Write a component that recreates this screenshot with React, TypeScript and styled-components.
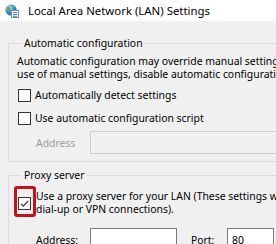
import React from "react";
import styled, { createGlobalStyle } from "styled-components";

const GlobalStyle = createGlobalStyle`
  html, body {
    margin: 0;
    padding: 0;
    background: #f0f0f0;
    overflow: hidden;
  }
  body {
    font-family: "Noto Sans", "Open Sans", sans-serif;
    font-size: 10.4px;
    color: #000;
  }
`;

const Window = styled.div`
  width: 276px;
  height: 244px;
  overflow: hidden;
  background: #f0f0f0;
`;

const TitleBar = styled.div`
  height: 21px;
  background: #fff;
  display: flex;
  align-items: center;
  padding-left: 5px;
  gap: 9px;
  white-space: nowrap;
`;

const Title = styled.span`
  font-size: 11.4px;
  color: #000;
`;

const Body = styled.div`
  padding: 14px 0 0 8px;
  display: flex;
  flex-direction: column;
  gap: 5px;
`;

const Group = styled.fieldset`
  width: 400px;
  margin: 0;
  border: 1px solid #dcdcdc;
  padding: 4px 0 7px 7px;
  display: flex;
  flex-direction: column;
  min-width: 0;
`;

const Legend = styled.legend`
  padding: 0 2px;
  margin-left: 6px;
  line-height: 16px;
  white-space: nowrap;
`;

const Para = styled.div`
  line-height: 13px;
  white-space: nowrap;
  margin-left: 1px;
`;

const Row = styled.div<{ $top?: number }>`
  display: flex;
  align-items: center;
  margin-top: ${(p) => p.$top ?? 0}px;
  margin-left: 2px;
  white-space: nowrap;
  line-height: 13px;
  position: relative;
`;

const Box = styled.span`
  width: 13px;
  height: 13px;
  box-sizing: border-box;
  border: 1px solid #333;
  background: #fff;
  flex: none;
  display: flex;
  align-items: center;
  justify-content: center;
  margin-right: 4px;
`;

const Highlight = styled.span`
  position: absolute;
  left: -4px;
  top: -4px;
  width: 22px;
  height: 31px;
  box-sizing: border-box;
  border: 3px solid #c1121f;
  border-radius: 3px;
`;

const FieldRow = styled.div<{ $top: number }>`
  display: flex;
  align-items: center;
  margin-top: ${(p) => p.$top}px;
  margin-left: 20px;
  white-space: nowrap;
`;

const Label = styled.span<{ $width: number; $gap?: number; $disabled?: boolean }>`
  width: ${(p) => p.$width}px;
  margin-left: ${(p) => p.$gap ?? 0}px;
  flex: none;
  color: ${(p) => (p.$disabled ? "#9b9b9b" : "#000")};
`;

const Input = styled.div<{ $width: number; $disabled?: boolean }>`
  width: ${(p) => p.$width}px;
  height: 23px;
  box-sizing: border-box;
  flex: none;
  border: 1px solid ${(p) => (p.$disabled ? "#cfcfcf" : "#7a7a7a")};
  background: ${(p) => (p.$disabled ? "#f0f0f0" : "#fff")};
  padding-left: 4px;
  display: flex;
  align-items: center;
`;

const NetIcon = () => (
  <svg width="14" height="14" viewBox="0 0 14 14">
    <defs>
      <radialGradient id="g" cx="0.35" cy="0.3" r="0.8">
        <stop offset="0" stopColor="#bfe3ff" />
        <stop offset="0.5" stopColor="#3a8fd8" />
        <stop offset="1" stopColor="#1d5fa8" />
      </radialGradient>
    </defs>
    <circle cx="6" cy="6" r="5.6" fill="url(#g)" />
    <path d="M2.5 3.2c1.2-.6 2.3-.2 2.6.7.3.9-.6 1.4-.2 2.3.4.9-.4 1.8-1.4 1.6C2.4 7.5 1.7 5.8 2.5 3.2z" fill="#5fae3a" />
    <path d="M7.2 1.5c1.3.2 2.6 1 3.1 2.2-.7.3-1.5 0-1.9-.6-.4-.5-1-.8-1.2-1.6z" fill="#5fae3a" />
    <rect x="6.5" y="6.5" width="7" height="7" fill="#fff" stroke="#7f8fa6" strokeWidth="1" />
    <rect x="8" y="8.2" width="4" height="0.9" fill="#2f6fc0" />
    <rect x="8" y="10" width="4" height="0.9" fill="#2f6fc0" />
    <rect x="8" y="11.8" width="4" height="0.9" fill="#2f6fc0" />
  </svg>
);

const Check = () => (
  <svg width="11" height="11" viewBox="0 0 11 11">
    <path d="M2 5.8l2.3 2.3L9.2 2.8" fill="none" stroke="#333" strokeWidth="1.2" />
  </svg>
);

export default function App() {
  return (
    <Window>
      <GlobalStyle />
      <TitleBar>
        <NetIcon />
        <Title>Local Area Network (LAN) Settings</Title>
      </TitleBar>
      <Body>
        <Group>
          <Legend>Automatic configuration</Legend>
          <Para>
            Automatic configuration may override manual settings.&nbsp; To ensure the
            <br />
            use of manual settings, disable automatic configuration.
          </Para>
          <Row $top={8}>
            <Box />
            Automatically detect settings
          </Row>
          <Row $top={10}>
            <Box />
            Use automatic configuration script
          </Row>
          <FieldRow $top={6}>
            <Label $width={54} $disabled>
              Address
            </Label>
            <Input $width={220} $disabled />
          </FieldRow>
        </Group>
        <Group>
          <Legend>Proxy server</Legend>
          <Row $top={3}>
            <Box>
              <Check />
            </Box>
            <Para>
              Use a proxy server for your LAN (These settings will not apply to
              <br />
              dial-up or VPN connections).
            </Para>
            <Highlight />
          </Row>
          <FieldRow $top={12}>
            <Label $width={54}>Address:</Label>
            <Input $width={87} />
            <Label $width={36} $gap={14}>
              Port:
            </Label>
            <Input $width={47}>80</Input>
          </FieldRow>
        </Group>
      </Body>
    </Window>
  );
}
